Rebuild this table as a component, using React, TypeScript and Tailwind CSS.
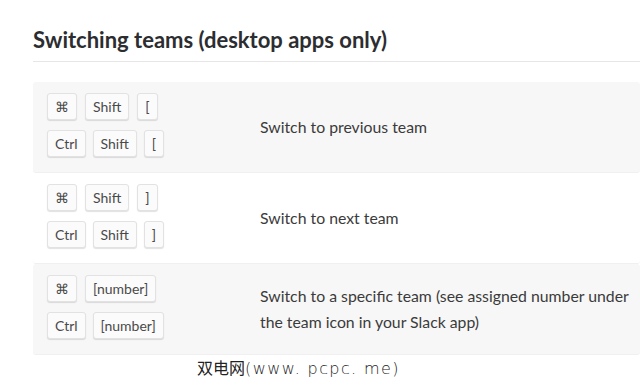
import React from "react";

const Key = ({ children }: { children: React.ReactNode }) => (
  <span className="inline-flex h-[27px] min-w-[20px] items-center justify-center rounded-[3px] border border-[#e2e2e2] bg-[#fbfbfb] px-[7px] text-[14px] leading-none text-[#4a4a4a] shadow-[0_1px_1px_rgba(0,0,0,0.12)]">
    {children}
  </span>
);

type Row = { mac: string[]; win: string[]; desc: React.ReactNode; gray: boolean };

const rows: Row[] = [
  { mac: ["⌘", "Shift", "["], win: ["Ctrl", "Shift", "["], desc: "Switch to previous team", gray: true },
  { mac: ["⌘", "Shift", "]"], win: ["Ctrl", "Shift", "]"], desc: "Switch to next team", gray: false },
  {
    mac: ["⌘", "[number]"],
    win: ["Ctrl", "[number]"],
    desc: (
      <>
        Switch to a specific team (see assigned number under
        <br />
        the team icon in your Slack app)
      </>
    ),
    gray: true,
  },
];

export default function App() {
  return (
    <div className="h-[390px] w-[640px] overflow-hidden bg-white font-['Lato',sans-serif]">
      <div className="pl-[33px] pt-[27px]">
        <h2 className="text-[22px] font-bold leading-[26px] text-[#2c2d30]">Switching teams (desktop apps only)</h2>
        <div className="mt-[8px] h-px bg-[#e6e6e6]" />
        <div className="mt-[20px]">
          {rows.map((r, i) => (
            <div
              key={i}
              className={`flex h-[91px] items-center rounded-[3px] border-b border-[#f0f0f0] ${r.gray ? "bg-[#f7f7f7]" : "bg-white"}`}
            >
              <div className="flex w-[227px] flex-col gap-[10px] pl-[14px] pb-[4px]">
                <div className="flex gap-[8px]">
                  {r.mac.map((k, j) => (
                    <Key key={j}>{k}</Key>
                  ))}
                </div>
                <div className="flex gap-[7px]">
                  {r.win.map((k, j) => (
                    <Key key={j}>{k}</Key>
                  ))}
                </div>
              </div>
              <div className="whitespace-nowrap text-[15.8px] leading-[26px] text-[#3b3b3b]">{r.desc}</div>
            </div>
          ))}
        </div>
        <div className="ml-[164px] mt-[1px] whitespace-nowrap font-['Noto_Sans_CJK_SC',sans-serif] text-[16px] leading-[22px] text-[#222]">
          双电网<span className="font-['DejaVu_Sans',sans-serif] font-light tracking-[1.4px]">(www. pcpc. me)</span>
        </div>
      </div>
    </div>
  );
}
